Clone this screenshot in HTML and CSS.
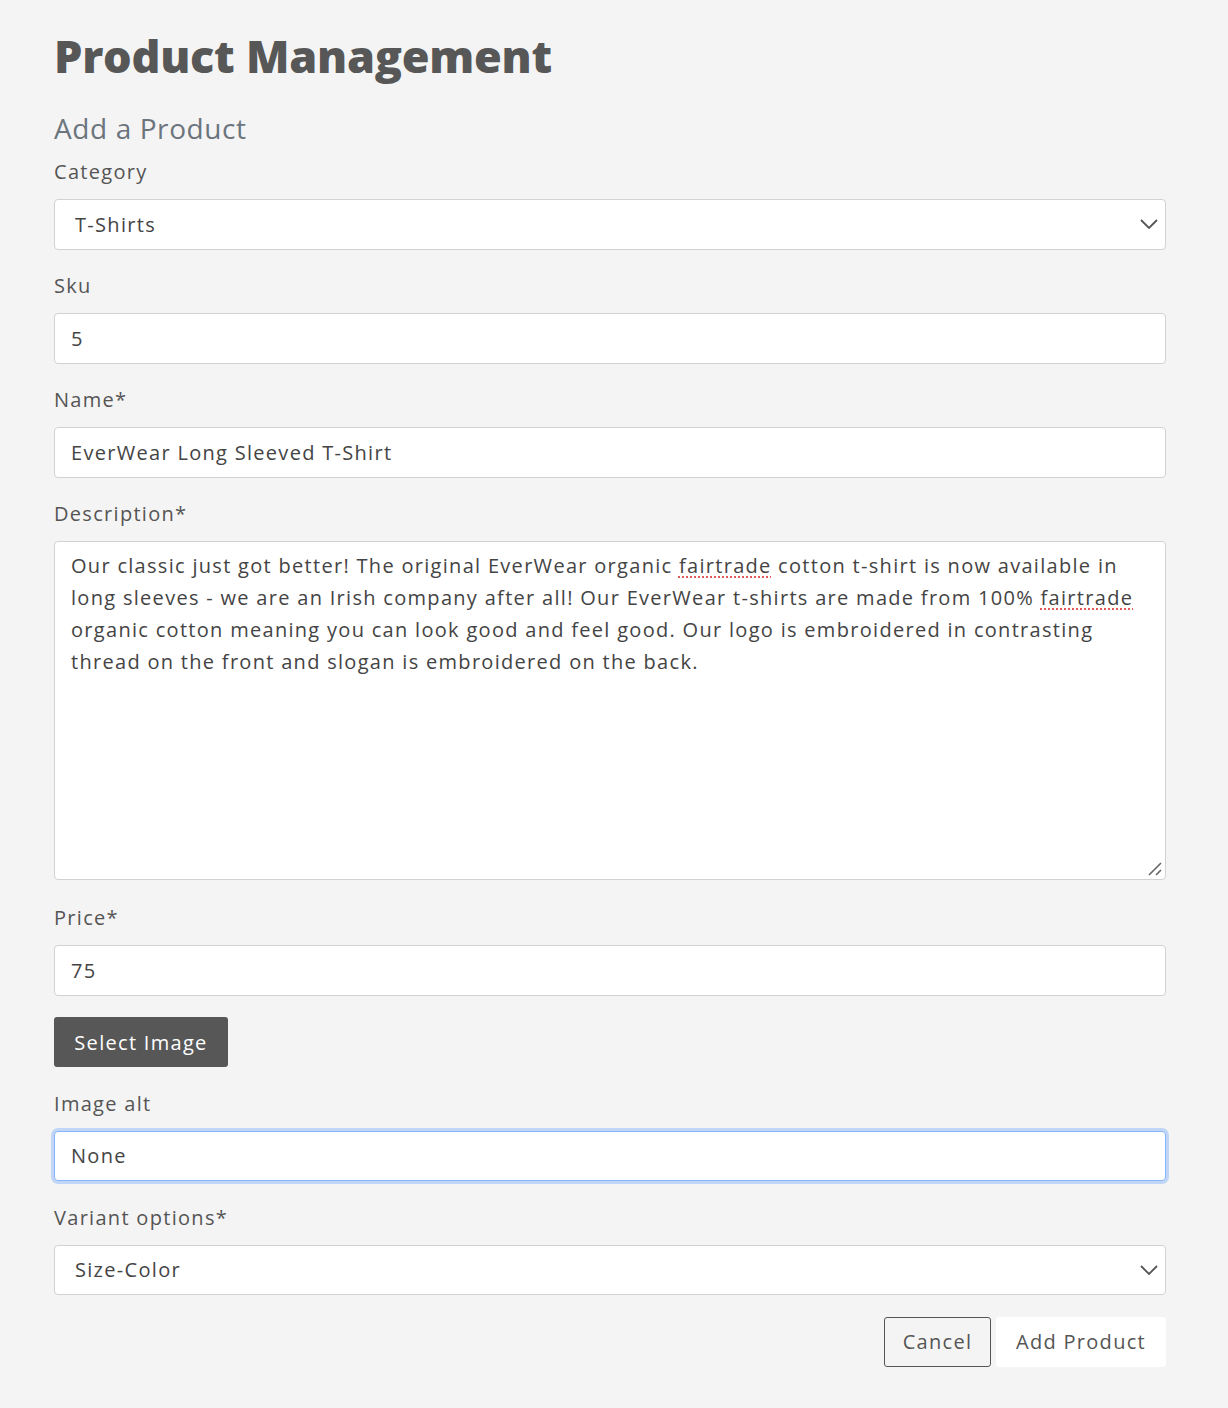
FILE: index.html
```html
<!DOCTYPE html>
<html lang="en">
<head>
<meta charset="utf-8">
<title>Product Management</title>
<link rel="stylesheet" href="styles.css">
</head>
<body>
<main class="page">
  <h1 class="title">Product Management</h1>
  <h2 class="subtitle">Add a Product</h2>
  <form class="form">
    <div class="group">
      <label class="label" for="category">Category</label>
      <div class="select-wrap">
        <select id="category" class="control select">
          <option>T-Shirts</option>
        </select>
        <svg class="chevron" width="18" height="10" viewBox="0 0 18 10"><path d="M1 1 L9 9 L17 1" fill="none" stroke="#555" stroke-width="1.8"/></svg>
      </div>
    </div>
    <div class="group">
      <label class="label" for="sku">Sku</label>
      <input id="sku" class="control" type="text" value="5">
    </div>
    <div class="group">
      <label class="label" for="name">Name*</label>
      <input id="name" class="control" type="text" value="EverWear Long Sleeved T-Shirt">
    </div>
    <div class="group group-wide">
      <label class="label">Description*</label>
      <div class="control textarea" role="textbox" aria-multiline="true">Our classic just got better! The original EverWear organic <span class="spell">fairtrade</span> cotton t-shirt is now available in long sleeves - we are an Irish company after all! Our EverWear t-shirts are made from 100% <span class="spell">fairtrade</span> organic cotton meaning you can look good and feel good. Our logo is embroidered in contrasting thread on the front and slogan is embroidered on the back.<svg class="grip" width="14" height="14" viewBox="0 0 14 14"><path d="M1 13 L13 1 M8 13 L13 8" stroke="#666" stroke-width="1.6" fill="none"/></svg></div>
    </div>
    <div class="group">
      <label class="label" for="price">Price*</label>
      <input id="price" class="control" type="text" value="75">
    </div>
    <div class="group">
      <button type="button" class="btn btn-dark">Select Image</button>
    </div>
    <div class="group">
      <label class="label" for="alt">Image alt</label>
      <input id="alt" class="control focused" type="text" value="None">
    </div>
    <div class="group">
      <label class="label" for="variant">Variant options*</label>
      <div class="select-wrap">
        <select id="variant" class="control select">
          <option>Size-Color</option>
        </select>
        <svg class="chevron" width="18" height="10" viewBox="0 0 18 10"><path d="M1 1 L9 9 L17 1" fill="none" stroke="#555" stroke-width="1.8"/></svg>
      </div>
    </div>
    <div class="actions">
      <button type="button" class="btn btn-outline">Cancel</button>
      <button type="button" class="btn btn-light">Add Product</button>
    </div>
  </form>
</main>
</body>
</html>
```
FILE: styles.css
```css
* { box-sizing: border-box; }
html, body { margin: 0; padding: 0; }
body {
  background: #f4f4f4;
  font-family: "Open Sans", "DejaVu Sans", sans-serif;
  color: #555;
}
.page {
  width: 1112px;
  margin-left: 54px;
  padding-top: 29px;
}
.title {
  margin: 0;
  font-size: 45px;
  line-height: 54px;
  font-weight: 800;
  color: #575757;
  letter-spacing: -0.25px;
}
.subtitle {
  margin: 28px 0 0 0;
  font-size: 28px;
  line-height: 34px;
  font-weight: 400;
  color: #6c757d;
  letter-spacing: 0.6px;
}
.form { margin-top: 12px; }
.group { margin-bottom: 21.5px; }
.group-wide { margin-bottom: 23px; }
.label {
  display: block;
  font-size: 20px;
  line-height: 30px;
  margin-bottom: 12px;
  color: #555;
  letter-spacing: 1.3px;
}
.control {
  display: block;
  width: 100%;
  height: 50.5px;
  padding: 0 16px;
  font-family: inherit;
  font-size: 20px;
  letter-spacing: 1.3px;
  color: #444;
  background: #fff;
  border: 1px solid #d2d2d2;
  border-radius: 4px;
  outline: none;
}
.select-wrap { position: relative; }
.select {
  appearance: none;
  -webkit-appearance: none;
  padding-left: 20px;
}
.chevron {
  position: absolute;
  right: 8px;
  top: 20px;
  pointer-events: none;
}
.textarea {
  position: relative;
  height: 339px;
  padding: 8px 16px;
  line-height: 32px;
  white-space: normal;
}
.spell {
  text-decoration: underline dotted #e05a5a;
  text-decoration-thickness: 2px;
  text-underline-offset: 3px;
}
.grip {
  position: absolute;
  right: 3px;
  bottom: 3px;
}
.focused {
  border-color: #86b7fe;
  box-shadow: 0 0 0 3px rgba(13, 110, 253, 0.22);
}
.btn {
  height: 50px;
  padding: 0 16px;
  font-family: inherit;
  font-size: 20px;
  letter-spacing: 1.3px;
  border-radius: 3px;
  cursor: pointer;
}
.btn-dark {
  width: 174px;
  background: #575757;
  color: #fff;
  border: none;
}
.actions {
  display: flex;
  justify-content: flex-end;
  gap: 5px;
  margin-top: 0.5px;
}
.btn-outline {
  width: 107px;
  background: transparent;
  color: #555;
  border: 1px solid #555;
}
.btn-light {
  width: 170px;
  background: #fff;
  color: #555;
  border: none;
}
```
